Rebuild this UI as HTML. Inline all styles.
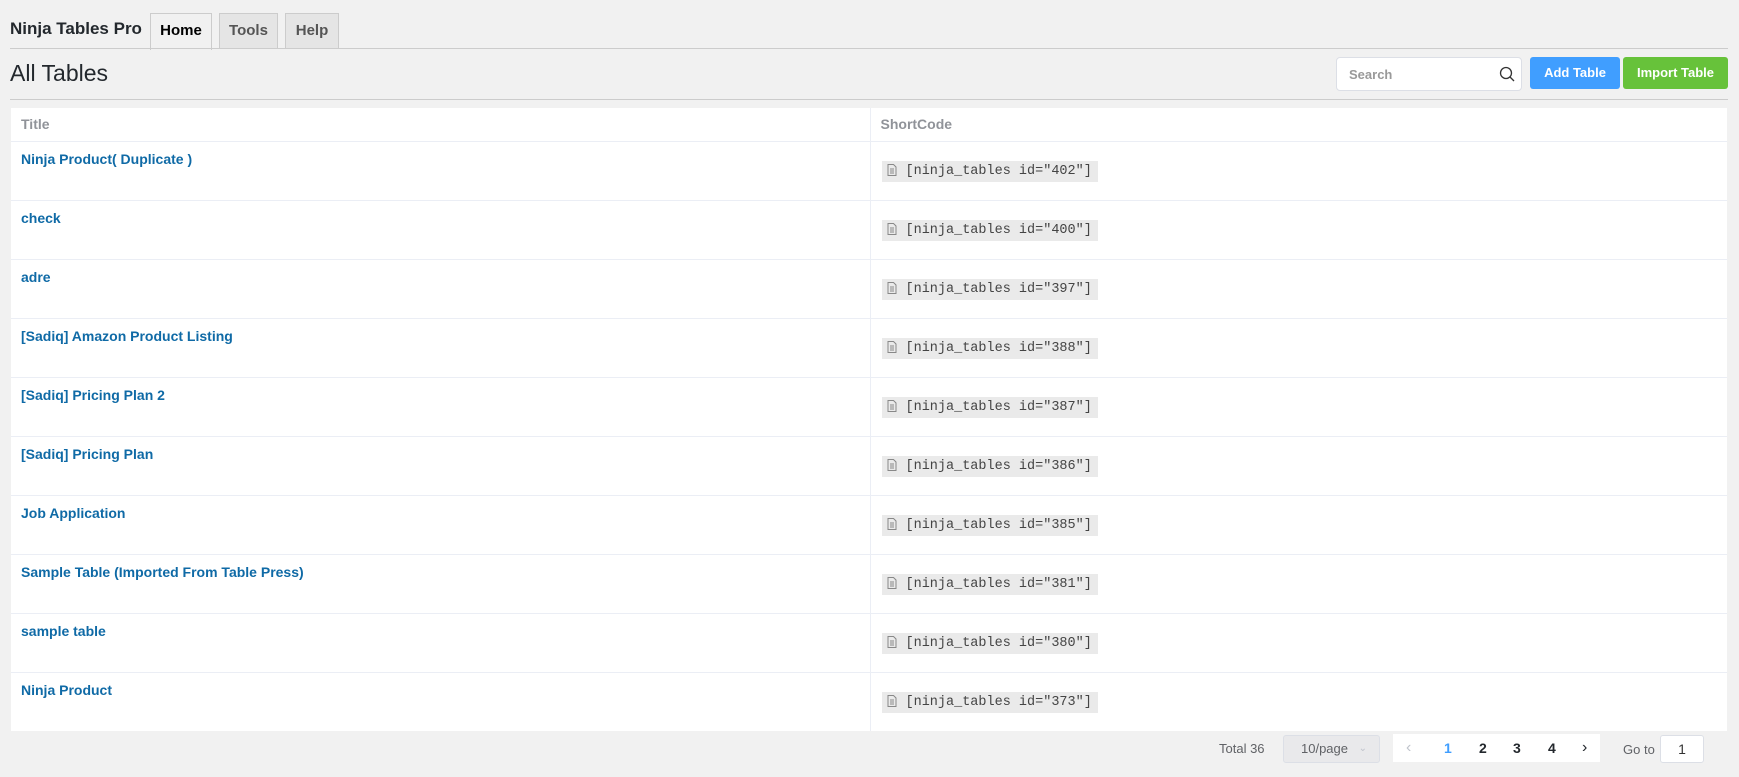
<!DOCTYPE html>
<html><head><meta charset="utf-8"><style>
*{box-sizing:border-box;margin:0;padding:0}
body{width:1739px;height:777px;background:#f1f1f1;font-family:"Liberation Sans",sans-serif;position:relative;overflow:hidden;color:#23282d}
.abs{position:absolute}
.brand{left:10px;top:19px;font-size:17px;font-weight:bold;color:#23282d}
.tab{top:13px;height:36px;border:1px solid #ccc;border-bottom:none;background:#e5e5e5;font-size:15px;font-weight:bold;color:#555;text-align:center;line-height:34px}
.tab.act{background:#f1f1f1;color:#000;height:37px}
.hr{left:10px;width:1718px;height:1px;background:#ccc}
h1{position:absolute;left:10px;top:60px;font-size:23px;font-weight:normal;color:#23282d}
.search{left:1336px;top:57px;width:186px;height:34px;background:#fff;border:1px solid #dcdfe6;border-radius:4px;font-size:13px;font-weight:bold;color:#999;padding:9px 12px}
.btn{top:57px;height:32px;border-radius:3px;color:#fff;font-size:13px;font-weight:bold;text-align:center;line-height:32px}
table{position:absolute;left:11px;top:108px;width:1716px;border-collapse:collapse;background:#fff}
th{height:33px;text-align:left;font-size:14px;color:#909399;padding:0 10px;border-bottom:1px solid #ebeef5}
td{height:59px;vertical-align:top;border-bottom:1px solid #ebeef5;padding:0 10px}
td:first-child,th:first-child{width:859px;border-right:1px solid #ebeef5}
td a{display:block;margin-top:9px;font-size:14px;font-weight:bold;color:#0f6aa6;text-decoration:none}
code{display:inline-block;margin-top:19px;margin-left:1px;background:#eaeaea;font-family:"Liberation Mono",monospace;font-size:13.5px;color:#444;height:21px;line-height:21px;padding:0 6px 0 5px}
code svg{vertical-align:-2px;margin-right:9px}
</style></head><body>
<div class="abs brand">Ninja Tables Pro</div>
<div class="abs tab act" style="left:150px;width:62px">Home</div>
<div class="abs tab" style="left:219px;width:59px">Tools</div>
<div class="abs tab" style="left:285px;width:54px">Help</div>
<div class="abs hr" style="top:48px"></div>
<h1>All Tables</h1>
<div class="abs hr" style="top:99px"></div>
<div class="abs search">Search
<svg style="position:absolute;right:6px;top:8px" width="16" height="16" viewBox="0 0 16 16"><circle cx="7" cy="7" r="5.5" fill="none" stroke="#333" stroke-width="1.3"/><line x1="11" y1="11" x2="15" y2="15" stroke="#333" stroke-width="1.3"/></svg></div>
<div class="abs btn" style="left:1530px;width:90px;background:#409eff">Add Table</div>
<div class="abs btn" style="left:1623px;width:105px;background:#67c23a">Import Table</div>
<table>
<tr><th>Title</th><th>ShortCode</th></tr>
<tr><td><a>Ninja Product( Duplicate )</a></td><td><code><svg width="10" height="12" viewBox="0 0 10 12"><path d="M1 .5h5.5l2.5 2.5v8.5h-8z M3 5h4M3 7h4M3 9h4" fill="none" stroke="#888"/></svg>[ninja_tables id="402"]</code></td></tr>
<tr><td><a>check</a></td><td><code><svg width="10" height="12" viewBox="0 0 10 12"><path d="M1 .5h5.5l2.5 2.5v8.5h-8z M3 5h4M3 7h4M3 9h4" fill="none" stroke="#888"/></svg>[ninja_tables id="400"]</code></td></tr>
<tr><td><a>adre</a></td><td><code><svg width="10" height="12" viewBox="0 0 10 12"><path d="M1 .5h5.5l2.5 2.5v8.5h-8z M3 5h4M3 7h4M3 9h4" fill="none" stroke="#888"/></svg>[ninja_tables id="397"]</code></td></tr>
<tr><td><a>[Sadiq] Amazon Product Listing</a></td><td><code><svg width="10" height="12" viewBox="0 0 10 12"><path d="M1 .5h5.5l2.5 2.5v8.5h-8z M3 5h4M3 7h4M3 9h4" fill="none" stroke="#888"/></svg>[ninja_tables id="388"]</code></td></tr>
<tr><td><a>[Sadiq] Pricing Plan 2</a></td><td><code><svg width="10" height="12" viewBox="0 0 10 12"><path d="M1 .5h5.5l2.5 2.5v8.5h-8z M3 5h4M3 7h4M3 9h4" fill="none" stroke="#888"/></svg>[ninja_tables id="387"]</code></td></tr>
<tr><td><a>[Sadiq] Pricing Plan</a></td><td><code><svg width="10" height="12" viewBox="0 0 10 12"><path d="M1 .5h5.5l2.5 2.5v8.5h-8z M3 5h4M3 7h4M3 9h4" fill="none" stroke="#888"/></svg>[ninja_tables id="386"]</code></td></tr>
<tr><td><a>Job Application</a></td><td><code><svg width="10" height="12" viewBox="0 0 10 12"><path d="M1 .5h5.5l2.5 2.5v8.5h-8z M3 5h4M3 7h4M3 9h4" fill="none" stroke="#888"/></svg>[ninja_tables id="385"]</code></td></tr>
<tr><td><a>Sample Table (Imported From Table Press)</a></td><td><code><svg width="10" height="12" viewBox="0 0 10 12"><path d="M1 .5h5.5l2.5 2.5v8.5h-8z M3 5h4M3 7h4M3 9h4" fill="none" stroke="#888"/></svg>[ninja_tables id="381"]</code></td></tr>
<tr><td><a>sample table</a></td><td><code><svg width="10" height="12" viewBox="0 0 10 12"><path d="M1 .5h5.5l2.5 2.5v8.5h-8z M3 5h4M3 7h4M3 9h4" fill="none" stroke="#888"/></svg>[ninja_tables id="380"]</code></td></tr>
<tr><td style="border-bottom:none"><a>Ninja Product</a></td><td style="border-bottom:none"><code><svg width="10" height="12" viewBox="0 0 10 12"><path d="M1 .5h5.5l2.5 2.5v8.5h-8z M3 5h4M3 7h4M3 9h4" fill="none" stroke="#888"/></svg>[ninja_tables id="373"]</code></td></tr>
</table>
<div class="abs" style="left:1219px;top:741px;font-size:13px;color:#606266">Total 36</div>
<div class="abs" style="left:1283px;top:735px;width:97px;height:28px;background:#e9e9eb;border:1px solid #dcdfe6;border-radius:3px;font-size:13px;color:#606266;line-height:26px;padding-left:17px">10/page<span style="position:absolute;right:12px;top:0;color:#c0c4cc;font-size:10px">&#8964;</span></div>
<div class="abs" style="left:1393px;top:734px;width:207px;height:28px;background:#fff;font-size:14px;font-weight:bold;line-height:28px">
<span class="abs" style="left:13px;color:#c0c4cc;font-weight:normal;font-size:16px">&lsaquo;</span>
<span class="abs" style="left:51px;color:#409eff">1</span>
<span class="abs" style="left:86px">2</span>
<span class="abs" style="left:120px">3</span>
<span class="abs" style="left:155px">4</span>
<span class="abs" style="left:189px;font-weight:normal;font-size:16px">&rsaquo;</span></div>
<div class="abs" style="left:1623px;top:742px;font-size:13px;color:#606266">Go to</div>
<div class="abs" style="left:1660px;top:735px;width:44px;height:28px;background:#fff;border:1px solid #dcdfe6;border-radius:3px;font-size:14px;text-align:center;line-height:26px;color:#333">1</div>
</body></html>
